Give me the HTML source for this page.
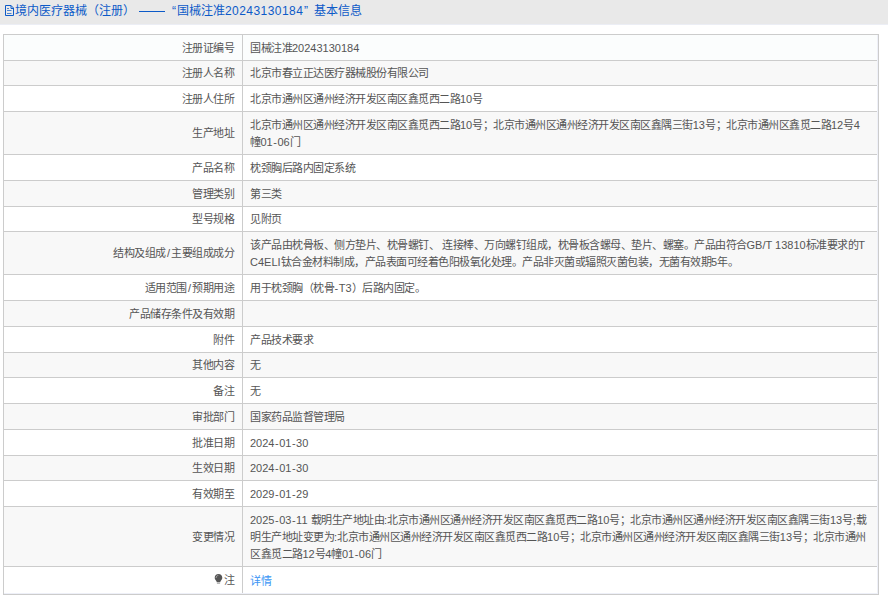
<!DOCTYPE html>
<html lang="zh-CN"><head><meta charset="utf-8">
<style>
html,body{margin:0;padding:0;background:#fff;width:888px;height:597px;overflow:hidden;}
body{font-family:"Liberation Sans",sans-serif;font-size:11px;letter-spacing:-0.5px;color:#555;position:relative;}
.hdr{position:absolute;left:0;top:0;width:888px;height:24px;background:#e9e9e9;}
.ht{position:absolute;top:3px;line-height:17px;font-size:12px;letter-spacing:0;color:#0c5ac8;white-space:nowrap;}
.hdr svg{position:absolute;left:4px;top:5px;}
.bg{position:absolute;left:3px;width:876px;}
.bl{position:absolute;left:3px;width:876px;height:1px;background:#cccccc;}
.vl{position:absolute;width:1px;background:#cccccc;}
.l{position:absolute;right:654px;text-align:right;white-space:nowrap;line-height:17.25px;}
.v{position:absolute;left:250px;white-space:nowrap;line-height:17.25px;}
a{color:#3a95f5;text-decoration:none;}
.a{letter-spacing:0;}
.h{margin:0 0.5px;}
.l .s{margin:0 1px;}
</style></head><body>
<div class="hdr"></div><div style="position:absolute;left:0;top:24px;width:888px;height:1px;background:#eceef5"></div><div>
<svg style="position:absolute;left:4px;top:5px" width="11" height="12" viewBox="0 0 11 12"><path d="M1.5 0.5H7L9.5 3V10.5H1.5Z" fill="none" stroke="#0c5ac8" stroke-width="1"/><path d="M7 0.5V3.5H9.5" fill="none" stroke="#0c5ac8" stroke-width="1"/><path d="M3 3.5H5M3 5.5H7.5M3 8.5H7.5" stroke="#0c5ac8" stroke-width="1" opacity="0.7"/></svg>
<span class="ht" style="left:15px">境内医疗器械（注册）</span>
<div style="position:absolute;left:139px;top:11px;width:26px;height:1px;background:#0c5ac8"></div>
<span class="ht" style="left:172px">“</span>
<span class="ht" style="left:177px">国械注准<span style="letter-spacing:0.45px">20243130184</span></span>
<span class="ht" style="left:304px">”</span>
<span class="ht" style="left:314px">基本信息</span>
</div>

<div class="bg" style="top:34px;height:26px;background:#fbfdfd"></div>
<div class="bg" style="top:60px;height:25px;background:#f8f8f8"></div>
<div class="bg" style="top:85px;height:26px;background:#ffffff"></div>
<div class="bg" style="top:111px;height:43px;background:#f8f8f8"></div>
<div class="bg" style="top:154px;height:26px;background:#ffffff"></div>
<div class="bg" style="top:180px;height:26px;background:#f8f8f8"></div>
<div class="bg" style="top:206px;height:25px;background:#ffffff"></div>
<div class="bg" style="top:231px;height:43px;background:#f8f8f8"></div>
<div class="bg" style="top:274px;height:26px;background:#ffffff"></div>
<div class="bg" style="top:300px;height:26px;background:#f8f8f8"></div>
<div class="bg" style="top:326px;height:26px;background:#ffffff"></div>
<div class="bg" style="top:352px;height:25px;background:#f8f8f8"></div>
<div class="bg" style="top:377px;height:26px;background:#ffffff"></div>
<div class="bg" style="top:403px;height:26px;background:#f8f8f8"></div>
<div class="bg" style="top:429px;height:26px;background:#ffffff"></div>
<div class="bg" style="top:455px;height:25px;background:#f8f8f8"></div>
<div class="bg" style="top:480px;height:26px;background:#ffffff"></div>
<div class="bg" style="top:506px;height:60px;background:#f8f8f8"></div>
<div class="bg" style="top:566px;height:28px;background:#ffffff"></div>
<div class="l" style="top:39.88px">注册证编号</div>
<div class="v" style="top:39.88px">国械注准<span class="a">20243130184</span></div>
<div class="l" style="top:65.38px">注册人名称</div>
<div class="v" style="top:65.38px">北京市春立正达医疗器械股份有限公司</div>
<div class="l" style="top:90.88px">注册人住所</div>
<div class="v" style="top:90.88px">北京市通州区通州经济开发区南区鑫觅西二路<span class="a">10</span>号</div>
<div class="l" style="top:125.38px">生产地址</div>
<div class="v" style="top:116.75px">北京市通州区通州经济开发区南区鑫觅西二路<span class="a">10</span>号；北京市通州区通州经济开发区南区鑫隅三街<span class="a">13</span>号；北京市通州区鑫觅二路<span class="a">12</span>号<span class="a">4</span><br>幢<span class="a">01<span class="h">-</span>06</span>门</div>
<div class="l" style="top:159.88px">产品名称</div>
<div class="v" style="top:159.88px">枕颈胸后路内固定系统</div>
<div class="l" style="top:185.88px">管理类别</div>
<div class="v" style="top:185.88px">第三类</div>
<div class="l" style="top:211.38px">型号规格</div>
<div class="v" style="top:211.38px">见附页</div>
<div class="l" style="top:245.38px">结构及组成<span class="a"><span class="s">/</span></span>主要组成成分</div>
<div class="v" style="top:236.75px">该产品由枕骨板、侧方垫片、枕骨螺钉、<span class="a"> </span>连接棒、万向螺钉组成，枕骨板含螺母、垫片、螺塞。产品由符合<span class="a">GB<span class="s">/</span>T 13810</span>标准要求的<span class="a">T</span><br><span class="a">C4ELI</span>钛合金材料制成，产品表面可经着色阳极氧化处理。产品非灭菌或辐照灭菌包装，无菌有效期<span class="a">5</span>年。</div>
<div class="l" style="top:279.88px">适用范围<span class="a"><span class="s">/</span></span>预期用途</div>
<div class="v" style="top:279.88px">用于枕颈胸（枕骨<span class="a"><span class="h">-</span>T3</span>）后路内固定。</div>
<div class="l" style="top:305.88px">产品储存条件及有效期</div>
<div class="v" style="top:305.88px"></div>
<div class="l" style="top:331.88px">附件</div>
<div class="v" style="top:331.88px">产品技术要求</div>
<div class="l" style="top:357.38px">其他内容</div>
<div class="v" style="top:357.38px">无</div>
<div class="l" style="top:382.88px">备注</div>
<div class="v" style="top:382.88px">无</div>
<div class="l" style="top:408.88px">审批部门</div>
<div class="v" style="top:408.88px">国家药品监督管理局</div>
<div class="l" style="top:434.88px">批准日期</div>
<div class="v" style="top:434.88px"><span class="a">2024<span class="h">-</span>01<span class="h">-</span>30</span></div>
<div class="l" style="top:460.38px">生效日期</div>
<div class="v" style="top:460.38px"><span class="a">2024<span class="h">-</span>01<span class="h">-</span>30</span></div>
<div class="l" style="top:485.88px">有效期至</div>
<div class="v" style="top:485.88px"><span class="a">2029<span class="h">-</span>01<span class="h">-</span>29</span></div>
<div class="l" style="top:528.88px">变更情况</div>
<div class="v" style="top:511.62px"><span class="a">2025<span class="h">-</span>03<span class="h">-</span>11 </span>载明生产地址由<span class="a">:</span>北京市通州区通州经济开发区南区鑫觅西二路<span class="a">10</span>号；北京市通州区通州经济开发区南区鑫隅三街<span class="a">13</span>号<span class="a">;</span>载<br>明生产地址变更为<span class="a">:</span>北京市通州区通州经济开发区南区鑫觅西二路<span class="a">10</span>号；北京市通州区通州经济开发区南区鑫隅三街<span class="a">13</span>号；北京市通州<br>区鑫觅二路<span class="a">12</span>号<span class="a">4</span>幢<span class="a">01<span class="h">-</span>06</span>门</div>
<svg style="position:absolute;left:214px;top:573px" width="9" height="11" viewBox="0 0 9 11"><path d="M4.5 0.9C2.3 0.9 0.7 2.6 0.7 4.7C0.7 6.2 1.6 7.0 2.3 8.0C2.6 8.5 2.7 8.9 2.8 9.3H6.2C6.3 8.9 6.4 8.5 6.7 8.0C7.4 7.0 8.3 6.2 8.3 4.7C8.3 2.6 6.7 0.9 4.5 0.9Z" fill="#555"/><path d="M2.9 9.6H6.1V10.8H2.9Z" fill="#aaa"/><path d="M2.1 5.0C2.1 3.6 3.0 2.6 4.3 2.4" fill="none" stroke="#b8b8b8" stroke-width="0.8"/></svg>
<div class="l" style="top:572.08px">注</div>
<div class="v" style="top:573.18px"><a>详情</a></div>
<div class="bl" style="top:34px"></div>
<div class="bl" style="top:60px"></div>
<div class="bl" style="top:85px"></div>
<div class="bl" style="top:111px"></div>
<div class="bl" style="top:154px"></div>
<div class="bl" style="top:180px"></div>
<div class="bl" style="top:206px"></div>
<div class="bl" style="top:231px"></div>
<div class="bl" style="top:274px"></div>
<div class="bl" style="top:300px"></div>
<div class="bl" style="top:326px"></div>
<div class="bl" style="top:352px"></div>
<div class="bl" style="top:377px"></div>
<div class="bl" style="top:403px"></div>
<div class="bl" style="top:429px"></div>
<div class="bl" style="top:455px"></div>
<div class="bl" style="top:480px"></div>
<div class="bl" style="top:506px"></div>
<div class="bl" style="top:566px"></div>
<div class="bl" style="top:594px"></div>
<div class="vl" style="left:3px;top:34px;height:561px"></div>
<div class="vl" style="left:242px;top:34px;height:561px"></div>
<div class="vl" style="left:878px;top:34px;height:561px"></div>
<div style="position:absolute;left:877px;top:35px;width:1px;height:559px;background:#eef0f8"></div>
<div style="position:absolute;left:4px;top:593px;width:874px;height:1px;background:#eef0f8"></div>
</body></html>
